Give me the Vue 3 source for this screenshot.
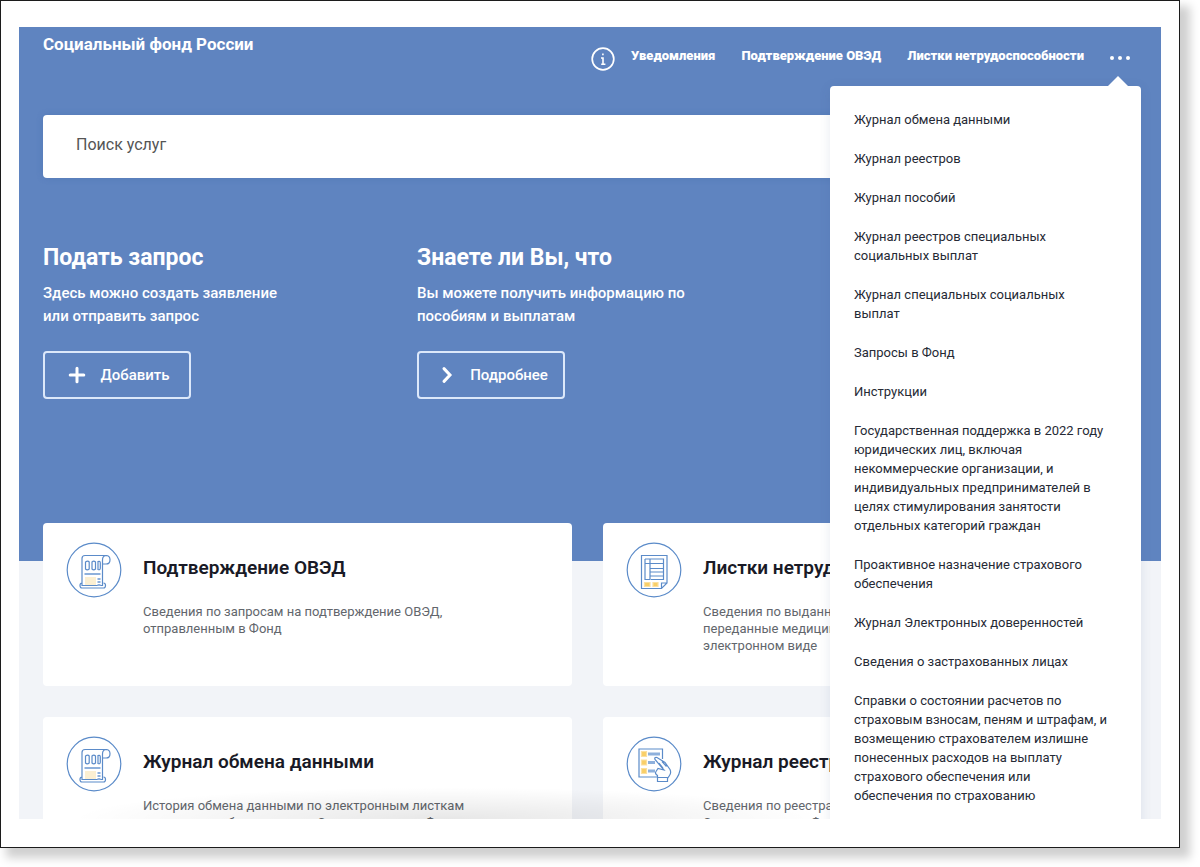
<script setup>
import { ref } from 'vue'

const query = ref('')

const navLinks = ['Уведомления', 'Подтверждение ОВЭД', 'Листки нетрудоспособности']

const menuItems = [
  'Журнал обмена данными',
  'Журнал реестров',
  'Журнал пособий',
  'Журнал реестров специальных\nсоциальных выплат',
  'Журнал специальных социальных\nвыплат',
  'Запросы в Фонд',
  'Инструкции',
  'Государственная поддержка в 2022 году\nюридических лиц, включая\nнекоммерческие организации, и\nиндивидуальных предпринимателей в\nцелях стимулирования занятости\nотдельных категорий граждан',
  'Проактивное назначение страхового\nобеспечения',
  'Журнал Электронных доверенностей',
  'Сведения о застрахованных лицах',
  'Справки о состоянии расчетов по\nстраховым взносам, пеням и штрафам, и\nвозмещению страхователем излишне\nпонесенных расходов на выплату\nстрахового обеспечения или\nобеспечения по страхованию',
]

const cards = [
  { icon: 'scroll', title: 'Подтверждение ОВЭД', text: 'Сведения по запросам на подтверждение ОВЭД,\nотправленным в Фонд' },
  { icon: 'sheet', title: 'Листки нетрудоспособности', text: 'Сведения по выданным листкам,\nпереданные медицинскими организациями в\nэлектронном виде' },
  { icon: 'scroll', title: 'Журнал обмена данными', text: 'История обмена данными по электронным листкам\nнетрудоспособности между Страхователем и Фондом' },
  { icon: 'hand', title: 'Журнал реестров', text: 'Сведения по реестрам, переданным\nСтрахователем в Фонд' },
]
</script>

<template>
  <div class="page">
    <div class="frame">
      <main class="panel">
        <section class="hero">
          <header class="header">
            <a class="brand" href="#">Социальный фонд России</a>
            <nav class="nav">
              <svg class="info" viewBox="0 0 24 24" aria-hidden="true">
                <circle cx="12" cy="12" r="10.8" fill="none" stroke="currentColor" stroke-width="1.7" />
                <path d="M11.900 6.600v1.600M10 11h2v6M10.200 17.200h4.200" fill="none" stroke="currentColor" stroke-width="1.6" />
              </svg>
              <a v-for="link in navLinks" :key="link" href="#">{{ link }}</a>
              <button class="more" type="button" aria-label="Ещё" aria-expanded="true">
                <i></i><i></i><i></i>
              </button>
            </nav>
            <ul class="menu">
              <li v-for="item in menuItems" :key="item"><a href="#">{{ item }}</a></li>
            </ul>
          </header>

          <input v-model="query" class="search" type="search" placeholder="Поиск услуг" aria-label="Поиск услуг" />

          <div class="promos">
            <div class="promo">
              <h2>Подать запрос</h2>
              <p>Здесь можно создать заявление<br />или отправить запрос</p>
              <button type="button">
                <svg viewBox="0 0 18 18" aria-hidden="true"><path d="M9 2.200v13.600M2.200 9h13.600" /></svg>
                <span>Добавить</span>
              </button>
            </div>
            <div class="promo">
              <h2>Знаете ли Вы, что</h2>
              <p>Вы можете получить информацию по<br />пособиям и выплатам</p>
              <button type="button">
                <svg viewBox="0 0 18 18" aria-hidden="true"><path d="M6 2.600l6 6.400-6 6.400" /></svg>
                <span>Подробнее</span>
              </button>
            </div>
          </div>
        </section>

        <section class="cards">
          <article v-for="card in cards" :key="card.title" class="card">
            <svg class="card-icon" viewBox="0 0 56 56" aria-hidden="true">
              <circle cx="28" cy="28" r="26.8" />
              <g v-if="card.icon === 'scroll'">
                <path class="fill-soft" d="M19 35h11v9H19z" />
                <path d="M16 41V16.500q0-3 3-3h21q4 0 4 4.300t-4 4.200h-3.500V41M36.500 22v-4q0-4.500 4-4.500M16 41q-2 0-2 2.500t2 2.500h21.500q2 0 2-2.500t-2-2.500M16 41v2.500h20.500V41" />
                <path d="M19.500 20q2.400-1.600 3.700 0v7q-2 1.600-3.700 0zM26 20q1.800-1.600 3.500 0v7q-1.800 1.600-3.500 0zM32 19.500q2.300-.8 2.300 1.500v5q0 2.400-2.300 1.500z" />
                <path class="pale" d="M18.500 32h16M31.500 37h3M31.500 40h3M31.500 43h3" />
              </g>
              <g v-else-if="card.icon === 'sheet'">
                <path d="M15.500 13.500h25.500V41l-5.500 5.500H15.500zM35.500 46.500V41H41" />
                <path d="M19 17h18.500v20.500H25M19 17v20.500h5V17M19 21.500h18.500M24 26.500h13.500M24 30h13.500M24 34h13.500" />
                <path class="yellow" d="M18.500 40.500h5.500v4h-5.500zM27 40.500h5v4h-5z" />
              </g>
              <g v-else>
                <path d="M36.500 23V13H13v28h18" />
                <path class="yellow" d="M15.500 15.500h5v5h-5zM15.500 24h5v5h-5zM15.500 32.500h5v5h-5z" />
                <path class="pale thick" d="M22 18h12M22 26.500h7M22 35h7" />
                <path d="M31.500 45.500v-6q-3-2-1.500-4l2-3 6 1.500-9-10.500q-1-2.500 2-2l8 5 5 7q1.500 3.500-.5 6l-2 3v3zM33 27l4 5M36 25.500l4.500 5M31.500 41.500h10" />
              </g>
            </svg>
            <div>
              <h3>{{ card.title }}</h3>
              <p>{{ card.text }}</p>
            </div>
          </article>
        </section>
      </main>
    </div>
  </div>
</template>

<style>
body {
  margin: 0;
  background: #fff;
}
</style>

<style scoped>
* {
  box-sizing: border-box;
}

.page {
  height: 100vh;
  padding: 0 20px 19px 0;
  overflow: hidden;
  font-family: Roboto, "Noto Sans", sans-serif;
}

.frame {
  height: 100%;
  padding: 26px 18px 28px;
  border: 1px solid #1c1c1c;
  background: #fff;
  box-shadow: 8px 8px 9px 2px #d0d0d0;
}

.panel {
  position: relative;
  height: 100%;
  overflow: hidden;
  background: #f2f4f8;
}

.panel::after {
  content: "";
  position: absolute;
  right: 331px;
  bottom: 0;
  left: 50px;
  height: 32px;
  background: radial-gradient(ellipse at 50% 100%, #00000018, transparent 70%);
}

.hero {
  min-height: 534px;
  padding: 0 29px 0 24px;
  background: #5f84c0;
  color: #fff;
}

.header {
  display: flex;
  justify-content: space-between;
  height: 88px;
}

a {
  color: inherit;
  text-decoration: none;
}

.brand {
  padding-top: 6px;
  font-size: 17px;
  font-weight: 700;
  line-height: 22px;
}

.nav {
  display: flex;
  height: 56px;
  align-items: center;
  gap: 26px;
  font-size: 13px;
  font-weight: 900;
  white-space: nowrap;
}

.info {
  width: 24px;
  height: 24px;
  margin: 8px -10px 0 0;
}

.more {
  display: flex;
  gap: 4px;
  padding: 6px 2px 0 0;
  border: 0;
  background: none;
}

.more i {
  width: 4px;
  height: 4px;
  border-radius: 50%;
  background: #fff;
}

.menu {
  position: absolute;
  z-index: 2;
  top: 59px;
  right: 20px;
  width: 311px;
  min-height: 100%;
  margin: 0;
  padding: 24px 16px 24px 24px;
  display: flex;
  flex-direction: column;
  gap: 20px;
  border-radius: 4px;
  background: #fff;
  box-shadow: 0 2px 12px #3c50781f;
  color: #262a35;
  font-size: 13px;
  line-height: 19px;
  list-style: none;
  white-space: pre;
}

.menu::before {
  content: "";
  position: absolute;
  top: -10px;
  right: 13px;
  border: solid transparent;
  border-width: 0 10px 10px;
  border-bottom-color: #fff;
}

.menu a {
  display: block;
}

.search {
  display: block;
  width: 100%;
  height: 63px;
  padding: 0 33px 4px;
  border: 0;
  border-radius: 4px;
  background: #fff;
  box-shadow: 0 0 6px #3f66a555;
  font-family: inherit;
  font-size: 16px;
}

.search::placeholder {
  color: #555;
  opacity: 1;
}

.promos {
  display: grid;
  grid-template-columns: repeat(3, 1fr);
  gap: 33px;
  padding-top: 65px;
}

h2 {
  margin: 0;
  font-size: 23px;
  font-weight: 700;
  line-height: 30px;
}

.promo p {
  margin: 9px 0 23px;
  font-size: 15px;
  font-weight: 500;
  line-height: 23px;
  white-space: nowrap;
}

.promo button {
  display: flex;
  align-items: center;
  justify-content: center;
  gap: 14px;
  width: 148px;
  height: 48px;
  padding: 0 0 0 4px;
  border: 2px solid #dce8fa;
  border-radius: 4px;
  background: none;
  color: #fff;
  font-family: inherit;
  font-size: 15px;
  font-weight: 500;
}

.promo svg {
  width: 18px;
  height: 18px;
  fill: none;
  stroke: currentColor;
  stroke-width: 3;
  stroke-linecap: round;
}

.cards {
  display: grid;
  grid-template-columns: 1fr 1fr;
  gap: 31px;
  margin-top: -38px;
  padding: 0 29px 0 24px;
}

.card {
  display: flex;
  gap: 21px;
  min-width: 0;
  min-height: 163px;
  padding: 19px 23px;
  border-radius: 4px;
  background: #fff;
  white-space: pre;
}

.card-icon {
  flex: none;
  width: 56px;
  height: 56px;
  fill: none;
  stroke: #5b8bc9;
  stroke-width: 1.2;
}

.fill-soft {
  fill: #fbefd2;
  stroke: none;
}

.yellow {
  fill: #f9cf68;
  stroke: #fbe0a0;
}

.pale {
  stroke: #8eb0dc;
  stroke-width: 2;
}

.thick {
  stroke-width: 3;
}

h3 {
  margin: 12px 0 21px;
  color: #191a26;
  font-size: 19px;
  font-weight: 600;
  line-height: 28px;
}

.card p {
  margin: 0;
  color: #62666c;
  font-size: 13px;
  line-height: 17px;
}
</style>
